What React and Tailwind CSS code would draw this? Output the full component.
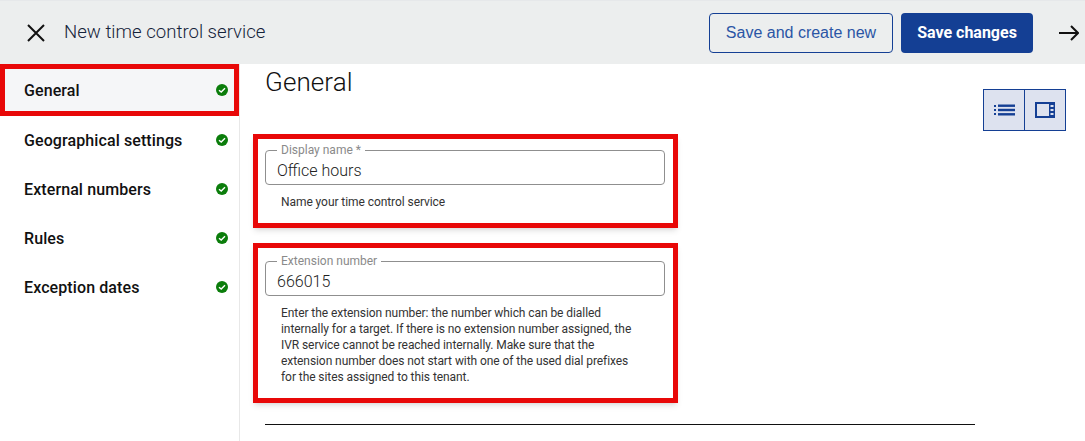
import React from 'react';

const NAV_ITEMS = ['Geographical settings', 'External numbers', 'Rules', 'Exception dates'];

function CheckBadge() {
  return (
    <svg width="12" height="12" viewBox="0 0 12 12" className="flex-shrink-0 -mt-[1px]">
      <circle cx="6" cy="6" r="6" fill="#0b7d0b" />
      <path d="M3 6.2 5.2 8 9 4.2" fill="none" stroke="#fff" strokeWidth="1.4" />
    </svg>
  );
}

function Field({ label, value }) {
  return (
    <fieldset className="h-[41px] w-[400px] border border-[#8f8f8f] rounded-[4px] pl-[11px] pr-3">
      <legend className="px-[4px] text-[12px] leading-[12px] text-[#8a8a8a]">{label}</legend>
      <div className="text-[16px] leading-[24px] font-light text-[#222] mt-[3px]">{value}</div>
    </fieldset>
  );
}

export default function App() {
  return (
    <div className="w-[1085px] h-[441px] overflow-hidden bg-white flex flex-col font-['Roboto',sans-serif]">
      {/* Header */}
      <header className="h-16 flex-shrink-0 bg-[#eceeee] border-t border-[#e6e8ea] flex items-center pl-[27px] pr-[6px]">
        <svg width="18" height="18" viewBox="0 0 18 18" fill="none" stroke="#111" strokeWidth="2" className="flex-shrink-0">
          <path d="M1 1 17 17M17 1 1 17" />
        </svg>
        <span className="ml-[19px] mt-[1px] text-[18.6px] font-light text-[#15233a]">New time control service</span>
        <button className="ml-auto w-[184px] h-10 rounded-[4px] border border-[#143f94] text-[#2a55a5] text-[16px] font-['Liberation_Sans',sans-serif]">
          Save and create new
        </button>
        <button className="ml-2 w-[132px] h-10 rounded-[4px] bg-[#143f94] text-white text-[16px] font-bold">
          Save changes
        </button>
        <svg width="20" height="16" viewBox="0 0 20 16" fill="none" stroke="#111" strokeWidth="2" className="ml-[26px] flex-shrink-0">
          <path d="M0 8H19M12 1l7 7-7 7" />
        </svg>
      </header>

      <div className="flex flex-1 min-h-0">
        {/* Sidebar */}
        <aside className="w-[240px] flex-shrink-0 border-r border-[#e8e8e8] flex flex-col">
          <div className="w-[239px] h-[52px] flex items-center justify-between bg-[#f5f6f8] border-[5px] border-[#e80808] pl-[19px] pr-[6px] text-[16px] font-medium text-[#111] tracking-[0.1px] pt-[1px]">
            General
            <CheckBadge />
          </div>
          {NAV_ITEMS.map((label) => (
            <div
              key={label}
              className="h-[49px] flex items-center justify-between pl-6 pr-[11px] text-[16px] font-medium text-[#111] tracking-[0.1px]"
            >
              {label}
              <CheckBadge />
            </div>
          ))}
        </aside>

        {/* Content */}
        <main className="flex-1 pl-[13px] pr-[19px] min-w-0">
          <div className="flex justify-between items-start h-[70px]">
            <h1 className="ml-3 text-[26px] leading-[36px] font-light text-[#111] tracking-[0.1px]">General</h1>
            <div className="mt-[25px] flex border border-[#143f94] bg-[#dde2ef] h-[42px] w-[83px] text-[#143f94]">
              <div className="w-[41px] border-r border-[#143f94] flex items-center justify-center">
                <svg width="21" height="12" viewBox="0 0 21 12" fill="currentColor">
                  <rect x="0" y="1" width="2" height="2" />
                  <rect x="0" y="5" width="2" height="2" />
                  <rect x="0" y="9" width="2" height="2" />
                  <rect x="4" y="0.5" width="17" height="2.4" />
                  <rect x="4" y="4.8" width="17" height="2.4" />
                  <rect x="4" y="9.1" width="17" height="2.4" />
                </svg>
              </div>
              <div className="flex-1 flex items-center justify-center">
                <svg width="20" height="16" viewBox="0 0 20 16" fill="currentColor">
                  <path d="M0 0h20v16H0V0Zm2 2v12h12V2H2Z" fillRule="evenodd" />
                  <rect x="15.5" y="3" width="3" height="2" fill="#dde2ef" />
                  <rect x="15.5" y="7" width="3" height="2" fill="#dde2ef" />
                  <rect x="15.5" y="11" width="3" height="2" fill="#dde2ef" />
                </svg>
              </div>
            </div>
          </div>

          <div className="w-[425px] h-[94px] border-[5px] border-[#e80808] shadow-md px-[7px] pt-[5px]">
            <Field label="Display name *" value="Office hours" />
            <p className="mt-[9px] pl-[16px] text-[12px] leading-4 text-[#333] tracking-[-0.07px]">Name your time control service</p>
          </div>

          <div className="mt-[15px] w-[425px] h-[160px] border-[5px] border-[#e80808] shadow-md px-[7px] pt-[7px]">
            <Field label="Extension number" value="666015" />
            <p className="mt-[9px] pl-[16px] pr-[26px] text-[12px] leading-4 text-[#333] tracking-[-0.07px]">
              Enter the extension number: the number which can be dialled internally for a target. If there is no extension number assigned, the IVR service cannot be reached internally. Make sure that the extension number does not start with one of the used dial prefixes for the sites assigned to this tenant.
            </p>
          </div>

          <div className="mt-[21px] ml-3 w-[710px] border-t border-[#111]" />
        </main>
      </div>
    </div>
  );
}
